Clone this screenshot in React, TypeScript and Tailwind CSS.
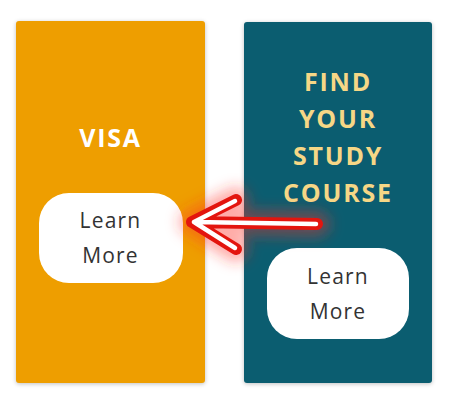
import React from "react";

function Arrow() {
  return (
    <svg
      className="absolute left-0 top-0 pointer-events-none"
      width={449}
      height={401}
      viewBox="0 0 449 401"
    >
      <defs>
        <filter id="glow" x="-30%" y="-80%" width="160%" height="260%">
          <feGaussianBlur stdDeviation="7" />
        </filter>
      </defs>
      <g fill="none" strokeLinecap="round" strokeLinejoin="round">
        <path
          d="M317 224 L192 222 M192 222 L236 200 M192 222 L236 249"
          stroke="rgba(255,50,40,0.4)"
          strokeWidth={26}
          filter="url(#glow)"
        />
        <path
          d="M317 224 L192 222 M192 222 L236 200 M192 222 L236 249"
          stroke="#E3150E"
          strokeWidth={12}
        />
        <path
          d="M316 224 L194 222 M194 222 L235 201 M194 222 L235 248"
          stroke="#ffffff"
          strokeWidth={4.5}
        />
      </g>
    </svg>
  );
}

export default function App() {
  const font = { fontFamily: '"Open Sans", "Noto Sans", sans-serif' };
  return (
    <div className="relative w-[449px] h-[401px] bg-white overflow-hidden" style={font}>
      <div className="flex pl-4 pt-[21px] gap-[39px]">
        <div className="w-[189px] h-[362px] bg-[#EE9E00] rounded-[3px] shadow-[0_1px_4px_rgba(0,0,0,0.25)] flex flex-col items-center pt-[98px]">
          <div className="text-[25px] leading-[37px] font-bold tracking-[1.8px] text-white">VISA</div>
          <div className="mt-[37px] w-[144px] h-[90px] rounded-[30px] bg-white flex flex-col items-center justify-center text-[21px] leading-[35px] tracking-[1.2px] text-[#333333]">
            <span>Learn</span>
            <span>More</span>
          </div>
        </div>
        <div className="w-[188px] h-[361px] mt-[1px] bg-[#0B5D70] rounded-[3px] shadow-[0_1px_4px_rgba(0,0,0,0.25)] flex flex-col items-center pt-[41px]">
          <div className="text-[25px] leading-[37px] font-bold tracking-[1.8px] text-[#F6D786] text-center flex flex-col">
            <span>FIND</span>
            <span>YOUR</span>
            <span>STUDY</span>
            <span>COURSE</span>
          </div>
          <div className="mt-[37px] w-[142px] h-[91px] rounded-[30px] bg-white flex flex-col items-center justify-center text-[21px] leading-[35px] tracking-[1.2px] text-[#333333]">
            <span>Learn</span>
            <span>More</span>
          </div>
        </div>
      </div>
      <Arrow />
    </div>
  );
}
